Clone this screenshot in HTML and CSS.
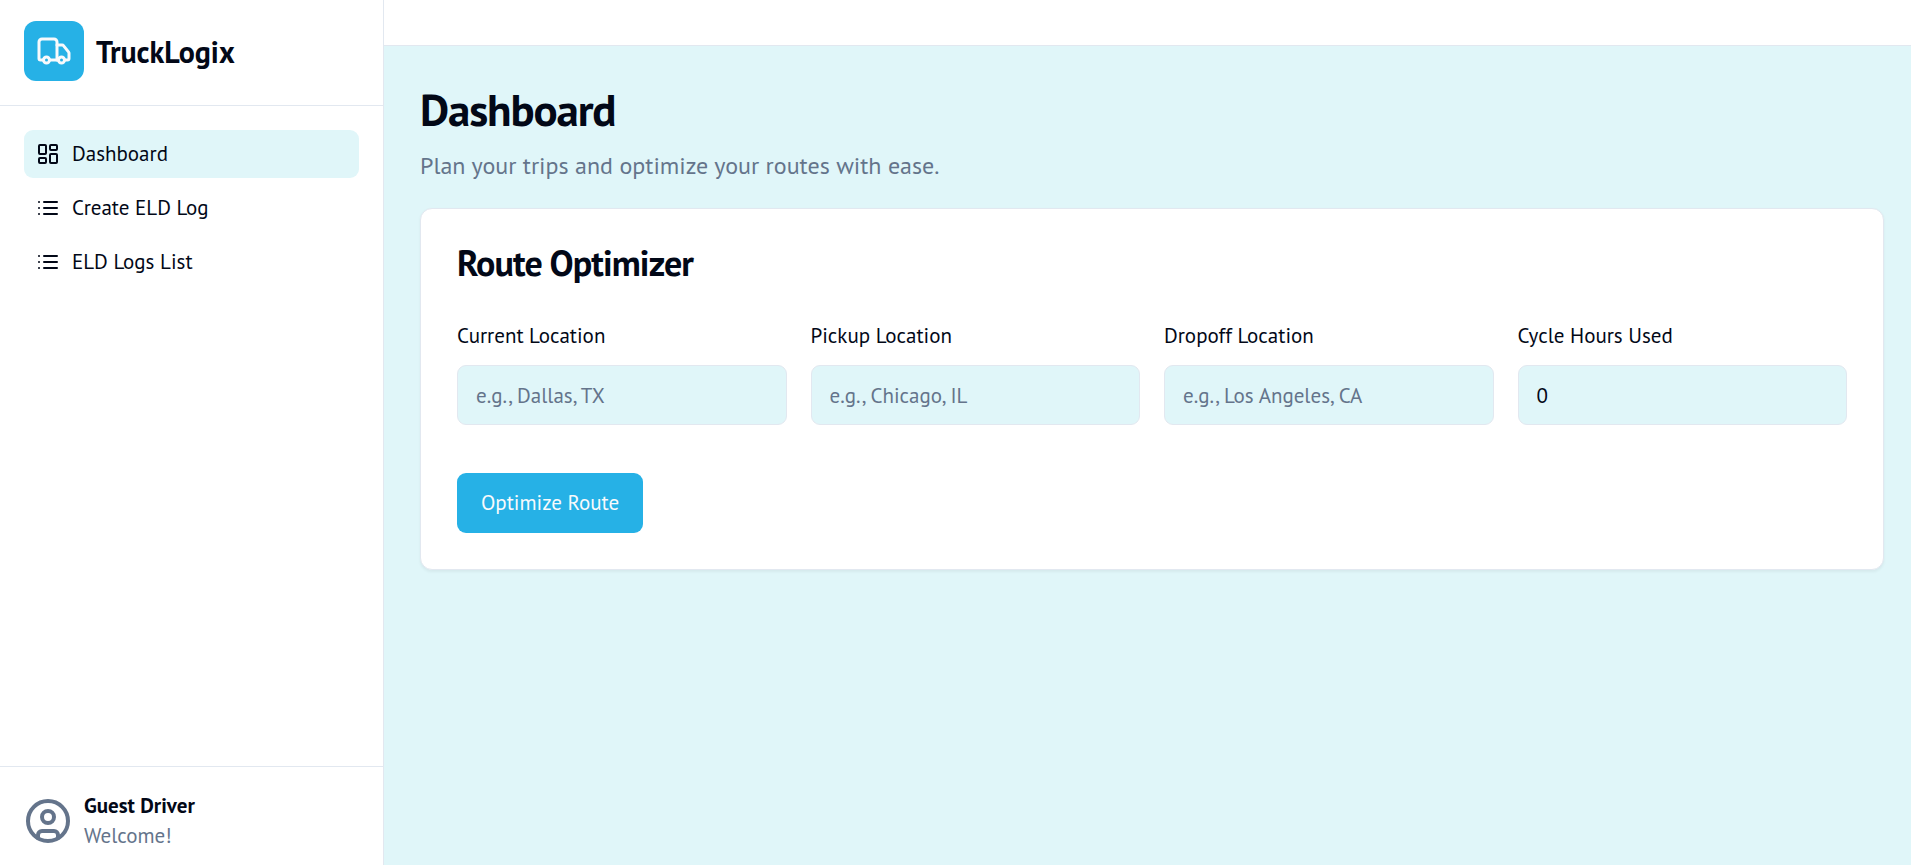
FILE: index.html
```html
<!DOCTYPE html>
<html lang="en">
<head>
<meta charset="utf-8">
<title>TruckLogix</title>
<link rel="stylesheet" href="styles.css">
</head>
<body>
<div class="app">
  <aside class="sidebar">
    <div class="brand">
      <div class="brand-logo">
        <svg class="icon-truck" viewBox="0 0 24 24"><path d="M14 18V6a2 2 0 0 0-2-2H4a2 2 0 0 0-2 2v11a1 1 0 0 0 1 1h2"/><path d="M15 18H9"/><path d="M19 18h2a1 1 0 0 0 1-1v-3.65a1 1 0 0 0-.22-.624l-3.48-4.35A1 1 0 0 0 17.52 8H14"/><circle cx="17" cy="18" r="2"/><circle cx="7" cy="18" r="2"/></svg>
      </div>
      <span class="brand-name">TruckLogix</span>
    </div>
    <nav class="nav">
      <a class="nav-item active">
        <svg class="icon-nav" viewBox="0 0 24 24"><rect width="7" height="9" x="3" y="3" rx="1"/><rect width="7" height="5" x="14" y="3" rx="1"/><rect width="7" height="9" x="14" y="12" rx="1"/><rect width="7" height="5" x="3" y="16" rx="1"/></svg>
        <span>Dashboard</span>
      </a>
      <a class="nav-item">
        <svg class="icon-nav" viewBox="0 0 24 24"><path d="M3 12h.01M3 18h.01M3 6h.01M8 12h13M8 18h13M8 6h13"/></svg>
        <span>Create ELD Log</span>
      </a>
      <a class="nav-item">
        <svg class="icon-nav" viewBox="0 0 24 24"><path d="M3 12h.01M3 18h.01M3 6h.01M8 12h13M8 18h13M8 6h13"/></svg>
        <span>ELD Logs List</span>
      </a>
    </nav>
    <div class="user">
      <svg class="icon-user" viewBox="0 0 24 24"><path d="M7 20.662V19a2 2 0 0 1 2-2h6a2 2 0 0 1 2 2v1.662"/><circle cx="12" cy="10" r="3"/><circle cx="12" cy="12" r="10"/></svg>
      <div class="user-text">
        <span class="user-name">Guest Driver</span>
        <span class="user-note">Welcome!</span>
      </div>
    </div>
  </aside>
  <div class="content">
    <header class="topbar"></header>
    <main class="main">
      <h1 class="page-title">Dashboard</h1>
      <p class="page-note">Plan your trips and optimize your routes with ease.</p>
      <section class="card">
        <h2 class="card-title">Route Optimizer</h2>
        <form class="form">
          <div class="fields">
            <div class="field">
              <label class="label" for="current">Current Location</label>
              <input class="input" id="current" placeholder="e.g., Dallas, TX">
            </div>
            <div class="field">
              <label class="label" for="pickup">Pickup Location</label>
              <input class="input" id="pickup" placeholder="e.g., Chicago, IL">
            </div>
            <div class="field">
              <label class="label" for="dropoff">Dropoff Location</label>
              <input class="input" id="dropoff" placeholder="e.g., Los Angeles, CA">
            </div>
            <div class="field">
              <label class="label" for="hours">Cycle Hours Used</label>
              <input class="input" id="hours" value="0">
            </div>
          </div>
          <button class="button" type="button">Optimize Route</button>
        </form>
      </section>
    </main>
  </div>
</div>
</body>
</html>
```
FILE: styles.css
```css
*, *::before, *::after { box-sizing: border-box; }

body {
  margin: 0;
  overflow: hidden;
  background: #e0f6f9;
  color: #020817;
  font-family: "PT Sans", "Noto Sans", sans-serif;
  font-size: 24px;
  line-height: 36px;
}

svg {
  flex: none;
  fill: none;
  stroke: currentColor;
  stroke-width: 2;
  stroke-linecap: round;
  stroke-linejoin: round;
}

.app { display: flex; height: 865px; }

.sidebar {
  display: flex;
  flex-direction: column;
  flex: none;
  width: 384px;
  background: #fff;
  border-right: 1px solid #e2e8f0;
}

.brand {
  display: flex;
  align-items: center;
  gap: 12px;
  padding: 21px 24px 24px;
  border-bottom: 1px solid #e2e8f0;
}
.brand-logo {
  display: flex;
  padding: 12px;
  border-radius: 12px;
  background: #26b1e6;
  color: #f8fafc;
}
.icon-truck { width: 36px; height: 36px; }
.brand-name { padding-top: 2px; font-size: 30px; line-height: 42px; font-weight: 700; }

.nav {
  display: flex;
  flex: 1;
  flex-direction: column;
  gap: 6px;
  padding: 24px;
}
.nav-item {
  display: flex;
  align-items: center;
  gap: 12px;
  height: 48px;
  padding: 0 12px;
  border-radius: 9px;
  font-size: 21px;
  line-height: 30px;
}
.nav-item.active { background: #e0f6f9; }
.icon-nav { width: 24px; height: 24px; }

.user {
  display: flex;
  align-items: center;
  gap: 12px;
  padding: 24px 24px 14px;
  border-top: 1px solid #e2e8f0;
}
.icon-user { width: 48px; height: 48px; color: #64748b; }
.user-text { display: flex; flex-direction: column; font-size: 21px; line-height: 30px; }
.user-name { font-weight: 700; }
.user-note { color: #64748b; }

.content { flex: 1; min-width: 0; }
.topbar { height: 46px; background: #fff; border-bottom: 1px solid #e2e8f0; }
.main { padding: 36px 27px 36px 36px; }

.page-title {
  margin: 0;
  font-size: 45px;
  line-height: 54px;
  letter-spacing: -0.025em;
}
.page-note { margin: 12px 0 24px; color: #64748b; }

.card {
  padding: 36px;
  border: 1px solid #e2e8f0;
  border-radius: 12px;
  background: #fff;
  box-shadow: 0 1.5px 3px rgba(0, 0, 0, 0.05);
}
.card-title {
  margin: 0 0 36px;
  font-size: 36px;
  line-height: 36px;
  letter-spacing: -0.025em;
}

.form { display: flex; flex-direction: column; align-items: flex-start; gap: 48px; }
.fields {
  display: grid;
  grid-template-columns: repeat(4, 1fr);
  gap: 24px;
  width: 100%;
}
.field { display: flex; flex-direction: column; gap: 11px; }
.label { padding-top: 1px; font-size: 21px; line-height: 36px; }
.input {
  width: 100%;
  height: 60px;
  padding: 12px 18px;
  border: 1px solid #e2e8f0;
  border-radius: 9px;
  background: #e0f6f9;
  color: inherit;
  font: 21px/30px "PT Sans", "Noto Sans", sans-serif;
}
.input::placeholder { color: #64748b; opacity: 1; }

.button {
  height: 60px;
  padding: 0 24px;
  border: 0;
  border-radius: 9px;
  background: #26b1e6;
  color: #f8fafc;
  font: 21px/30px "PT Sans", "Noto Sans", sans-serif;
}
```
